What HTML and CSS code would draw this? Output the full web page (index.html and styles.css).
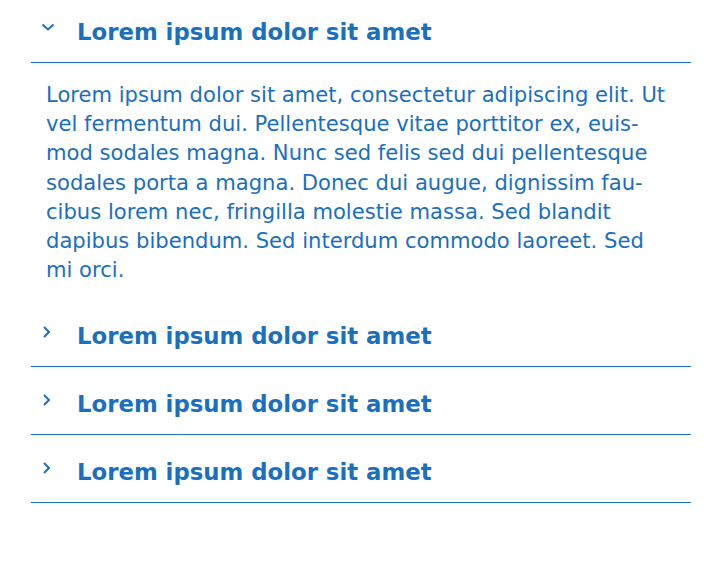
FILE: index.html
```html
<!DOCTYPE html>
<html lang="en">
<head>
<meta charset="utf-8">
<title>Accordion</title>
<link rel="stylesheet" href="styles.css">
</head>
<body>
<div class="accordion">
  <div class="acc-item open">
    <div class="acc-header">
      <span class="chev"><svg width="14" height="8" viewBox="0 0 14 8"><path d="M1.5 1.5 L7 6.5 L12.5 1.5" fill="none" stroke="currentColor" stroke-width="2"/></svg></span>
      <h3 class="acc-title">Lorem ipsum dolor sit amet</h3>
    </div>
    <div class="acc-panel">
      <p>Lorem ipsum dolor sit amet, consectetur adipiscing elit. Ut vel fermentum dui. Pellentesque vitae porttitor ex, euis&shy;mod sodales magna. Nunc sed felis sed dui pellentesque sodales porta a magna. Donec dui augue, dignissim fau&shy;cibus lorem nec, fringilla molestie massa. Sed blandit dapibus bibendum. Sed interdum commodo laoreet. Sed mi orci.</p>
    </div>
  </div>
  <div class="acc-item">
    <div class="acc-header">
      <span class="chev"><svg width="14" height="12" viewBox="0 0 14 12"><path d="M2 1 L7 6 L2 11" fill="none" stroke="currentColor" stroke-width="2"/></svg></span>
      <h3 class="acc-title">Lorem ipsum dolor sit amet</h3>
    </div>
  </div>
  <div class="acc-item">
    <div class="acc-header">
      <span class="chev"><svg width="14" height="12" viewBox="0 0 14 12"><path d="M2 1 L7 6 L2 11" fill="none" stroke="currentColor" stroke-width="2"/></svg></span>
      <h3 class="acc-title">Lorem ipsum dolor sit amet</h3>
    </div>
  </div>
  <div class="acc-item">
    <div class="acc-header">
      <span class="chev"><svg width="14" height="12" viewBox="0 0 14 12"><path d="M2 1 L7 6 L2 11" fill="none" stroke="currentColor" stroke-width="2"/></svg></span>
      <h3 class="acc-title">Lorem ipsum dolor sit amet</h3>
    </div>
  </div>
</div>
</body>
</html>
```

FILE: styles.css
```css
html, body {
  margin: 0;
  padding: 0;
  background: #ffffff;
}
body {
  font-family: "DejaVu Sans", sans-serif;
  color: #1a6fc1;
}
.accordion {
  width: 660px;
  margin-left: 31px;
}
.acc-header {
  display: flex;
  align-items: flex-start;
  padding: 24px 0 17px 0;
  border-bottom: 1px solid #1c6ec0;
}
.acc-item:first-child .acc-header {
  padding-top: 19px;
}
.chev {
  width: 46px;
  display: flex;
  padding-left: 11px;
  box-sizing: border-box;
  padding-top: 3px;
  color: #1a6fc1;
}
.acc-item.open .chev {
  padding-left: 10px;
  padding-top: 4px;
}
.acc-title {
  margin: 0;
  font-size: 22.8px;
  font-weight: bold;
  line-height: 26px;
  color: #1a6fc1;
}
.acc-panel {
  padding: 17px 22px 15px 15px;
}
.acc-panel p {
  margin: 0;
  font-size: 21.1px;
  line-height: 29.2px;
  hyphens: manual;
}
```
